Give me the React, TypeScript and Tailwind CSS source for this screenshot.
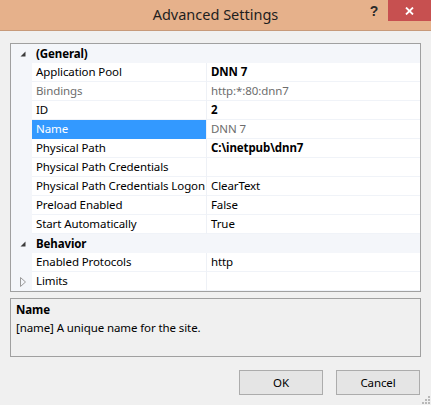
import React from "react";

type Row =
  | { kind: "cat"; label: string; expanded: boolean }
  | { kind: "prop"; label: string; value: string; bold?: boolean; gray?: boolean; selected?: boolean; expander?: boolean };

const rows: Row[] = [
  { kind: "cat", label: "(General)", expanded: true },
  { kind: "prop", label: "Application Pool", value: "DNN 7", bold: true },
  { kind: "prop", label: "Bindings", value: "http:*:80:dnn7", gray: true },
  { kind: "prop", label: "ID", value: "2", bold: true },
  { kind: "prop", label: "Name", value: "DNN 7", gray: true, selected: true },
  { kind: "prop", label: "Physical Path", value: "C:\\inetpub\\dnn7", bold: true },
  { kind: "prop", label: "Physical Path Credentials", value: "" },
  { kind: "prop", label: "Physical Path Credentials Logon", value: "ClearText" },
  { kind: "prop", label: "Preload Enabled", value: "False" },
  { kind: "prop", label: "Start Automatically", value: "True" },
  { kind: "cat", label: "Behavior", expanded: true },
  { kind: "prop", label: "Enabled Protocols", value: "http" },
  { kind: "prop", label: "Limits", value: "", expander: true },
];

const font = { fontFamily: '"Noto Sans", "Open Sans", Arial, sans-serif' };

function ExpandedTri() {
  return (
    <svg width="6" height="6" viewBox="0 0 6 6">
      <polygon points="5.5,0.5 5.5,5.5 0.5,5.5" fill="#3c3c3c" />
    </svg>
  );
}

function CollapsedTri() {
  return (
    <svg width="6" height="10" viewBox="0 0 6 10">
      <polygon points="0.5,0.5 5.5,5 0.5,9.5" fill="none" stroke="#9a9a9a" strokeWidth="1" />
    </svg>
  );
}

export default function App() {
  return (
    <div className="w-[431px] h-[405px] bg-[#f0f0f0] flex flex-col relative overflow-hidden text-[11.5px] tracking-[-0.1px] text-black" style={font}>
      {/* Title bar */}
      <div className="h-[31px] bg-[#e6b18b] border-b border-[#c79a7a] flex items-start relative shrink-0">
        <div className="absolute inset-x-0 top-0 h-[30px] flex items-center justify-center text-[14.5px] tracking-normal text-[#1e1e1e]">
          Advanced Settings
        </div>
        <div className="ml-auto flex items-start relative">
          <div className="w-[28px] h-[21px] flex items-center justify-center text-[14px] font-bold text-[#2a2a2a] leading-none" style={{ fontFamily: '"Liberation Sans", Arial, sans-serif' }}>?</div>
          <div className="w-[43px] h-[21px] bg-[#c75050] flex items-center justify-center">
            <svg width="9" height="8" viewBox="0 0 9 8">
              <path d="M1 0.5 L8 7.5 M8 0.5 L1 7.5" stroke="#ffffff" strokeWidth="1.8" />
            </svg>
          </div>
        </div>
      </div>

      {/* Property grid */}
      <div className="mt-[12px] mx-[10px] w-[411px] border border-[#a0a0a0] bg-white flex flex-col shrink-0">
        {rows.map((r, i) =>
          r.kind === "cat" ? (
            <div key={i} className="h-[19px] bg-[#f4f6fa] flex items-center">
              <div className="w-[21px] flex items-center justify-center pl-[2px]">
                <ExpandedTri />
              </div>
              <div className="pl-[4px] font-bold">{r.label}</div>
            </div>
          ) : (
            <div key={i} className="h-[19px] flex">
              <div className="w-[21px] bg-[#f4f6fa] flex items-center justify-center pl-[2px]">
                {r.expander ? <CollapsedTri /> : null}
              </div>
              <div
                className={
                  "w-[174px] pl-[4px] flex items-center whitespace-nowrap overflow-hidden border-b " +
                  (r.selected ? "bg-[#3399ff] text-white border-[#3399ff]" : "border-[#f0f3f8] " + (r.gray ? "text-[#6d6d6d]" : ""))
                }
              >
                {r.label}
              </div>
              <div className="w-[1px] bg-[#eef1f6]" />
              <div
                className={
                  "flex-1 pl-[4px] flex items-center whitespace-nowrap border-b border-[#f0f3f8] " +
                  (r.gray ? "text-[#6d6d6d] " : "") +
                  (r.bold ? "font-bold" : "")
                }
              >
                {r.value}
              </div>
            </div>
          )
        )}
      </div>

      {/* Description */}
      <div className="mt-[6px] mx-[10px] w-[411px] h-[59px] border border-[#a0a0a0] px-[5px] pt-[2px] flex flex-col shrink-0">
        <div className="font-bold h-[18px] leading-[18px]">Name</div>
        <div className="h-[18px] leading-[18px]">[name] A unique name for the site.</div>
      </div>

      {/* Buttons */}
      <div className="mt-[13px] flex justify-end gap-[13px] pr-[11px]">
        <button className="w-[84px] h-[25px] bg-[#e5e5e5] border border-[#acacac] flex items-center justify-center">OK</button>
        <button className="w-[84px] h-[25px] bg-[#e5e5e5] border border-[#acacac] flex items-center justify-center">Cancel</button>
      </div>

      {/* Size grip */}
      <div className="absolute right-[1px] bottom-[1px]">
        <svg width="9" height="9" viewBox="0 0 9 9">
          {[
            [7, 1], [4, 4], [7, 4], [1, 7], [4, 7], [7, 7],
          ].map(([x, y], k) => (
            <rect key={k} x={x} y={y} width="2" height="2" fill="#b8b8b8" />
          ))}
        </svg>
      </div>
    </div>
  );
}
